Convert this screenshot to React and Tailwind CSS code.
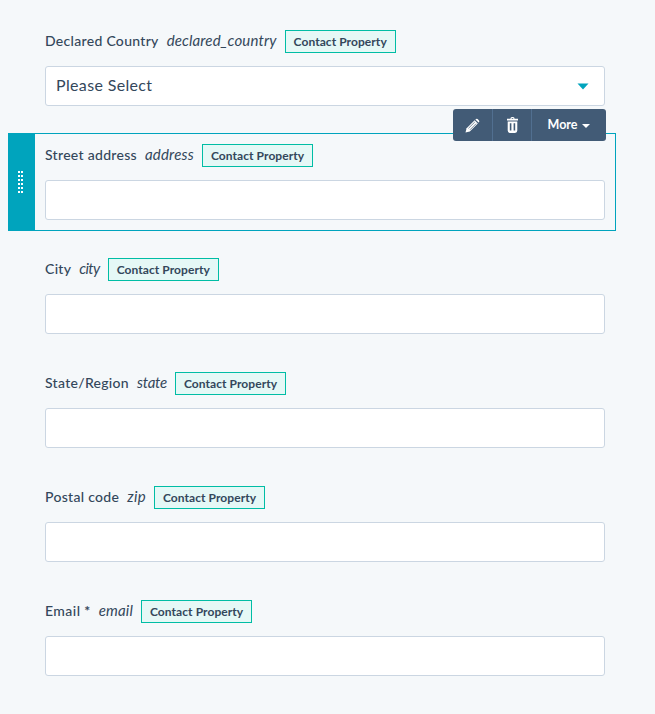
import React from 'react';

const fields = [
  { label: 'City', name: 'city', nameClass: 'tracking-[-0.6px]' },
  { label: 'State/Region', name: 'state', nameClass: 'tracking-[-0.25px]' },
  { label: 'Postal code', name: 'zip', nameClass: 'tracking-[0.3px]' },
  { label: 'Email', required: true, name: 'email', labelClass: 'tracking-[0.45px]', nameClass: 'tracking-[0.15px]' },
];

const LabelRow = ({ label, required, name, labelClass = 'tracking-[0.3px]', nameClass = 'tracking-[0.15px]' }) => (
  <div className="flex items-center h-[23px]">
    <span className={`pb-[2px] text-[14px] font-medium text-[#33475b] ${labelClass}`}>
      {label}
      {required && <span className="font-bold"> *</span>}
    </span>
    <span className={`pb-[2px] ml-2 text-[15px] italic text-[#33475b] ${nameClass}`}>{name}</span>
    <span className="ml-2 h-[23px] px-[8px] flex items-center border border-[#00bda5] bg-[#e5f8f6] text-[12px] font-bold text-[#33475b] tracking-[0.07px]">
      Contact Property
    </span>
  </div>
);

const TextBox = ({ children }) => (
  <div className="mt-[13px] h-[40px] w-[560px] flex items-center justify-between px-[10px] bg-white border border-[#cbd6e2] rounded-[3px]">
    {children}
  </div>
);

const PencilIcon = () => (
  <svg width="15" height="15" viewBox="0 0 15 15" fill="white">
    <path d="M0.5 14.5 L1.6 10.2 L9.6 2.2 L12.8 5.4 L4.8 13.4 Z" />
    <path d="M10.6 1.2 Q11.6 0.2 12.6 1 L14 2.4 Q14.8 3.4 13.8 4.4 L13.6 4.6 L10.4 1.4 Z" />
    <path d="M3.4 10.4 L9.8 4 M5 11.8 L11.2 5.6" stroke="#425b76" strokeWidth="0.7" />
  </svg>
);

const TrashIcon = () => (
  <svg width="11" height="16" viewBox="0 0 11 16" fill="white">
    <path d="M3.4 1.8 Q3.4 0 5 0 H6 Q7.6 0 7.6 1.8 H11 V3.4 H0 V1.8 Z M4.6 1.8 H6.4 Q6.4 1 6 1 H5 Q4.6 1 4.6 1.8 Z" fillRule="evenodd" />
    <path d="M0.7 4.4 H10.3 V13.6 Q10.3 16 8 16 H3 Q0.7 16 0.7 13.6 Z M2.8 6.2 V13.4 H4.4 V6.2 Z M6.6 6.2 V13.4 H8.2 V6.2 Z" fillRule="evenodd" />
  </svg>
);

const App = () => {
  return (
    <div className="w-[655px] h-[714px] overflow-hidden bg-[#f5f8fa] pt-[30px] pl-[45px] font-['Lato',sans-serif]">
      <div className="mb-[27px]">
        <LabelRow label="Declared Country" name="declared_country" />
        <TextBox>
          <span className="pb-[2px] text-[16px] text-[#33475b] tracking-[0.35px]">Please Select</span>
          <svg width="12" height="7" viewBox="0 0 12 7" className="mr-[5px]">
            <path d="M0.5 0.5 H11.5 L6 6.5 Z" fill="#00a4bd" />
          </svg>
        </TextBox>
      </div>

      <div className="relative ml-[-37px] w-[608px] h-[98px] flex border border-[#00a4bd] mb-[27px]">
        <div className="w-[27px] ml-[-1px] my-[-1px] bg-[#00a4bd] flex items-center justify-center shrink-0">
          <div className="grid grid-cols-2 gap-x-[1px] gap-y-[2px] mr-[2px]">
            {Array.from({ length: 12 }).map((_, i) => (
              <span key={i} className="w-[2px] h-[2px] bg-white" />
            ))}
          </div>
        </div>
        <div className="pl-[10px] pt-[10px]">
          <LabelRow label="Street address" name="address" nameClass="tracking-[0.2px]" />
          <TextBox />
        </div>
        <div className="absolute top-[-25px] left-[444px] w-[153px] h-[32px] flex items-center bg-[#425b76] rounded-[3px] text-white">
          <div className="w-[40px] h-full flex items-center justify-center border-r border-[#516f90]">
            <PencilIcon />
          </div>
          <div className="w-[39px] h-full flex items-center justify-center border-r border-[#516f90]">
            <TrashIcon />
          </div>
          <div className="flex-1 flex items-center justify-center gap-[5px] text-[12.5px] font-bold">
            More
            <svg width="8" height="4" viewBox="0 0 8 4" className="mt-[1px]">
              <path d="M0 0 H8 L4 4 Z" fill="white" />
            </svg>
          </div>
        </div>
      </div>

      {fields.map((f) => (
        <div key={f.name} className="mb-[38px]">
          <LabelRow label={f.label} required={f.required} name={f.name} labelClass={f.labelClass} nameClass={f.nameClass} />
          <TextBox />
        </div>
      ))}
    </div>
  );
};

export default App;
